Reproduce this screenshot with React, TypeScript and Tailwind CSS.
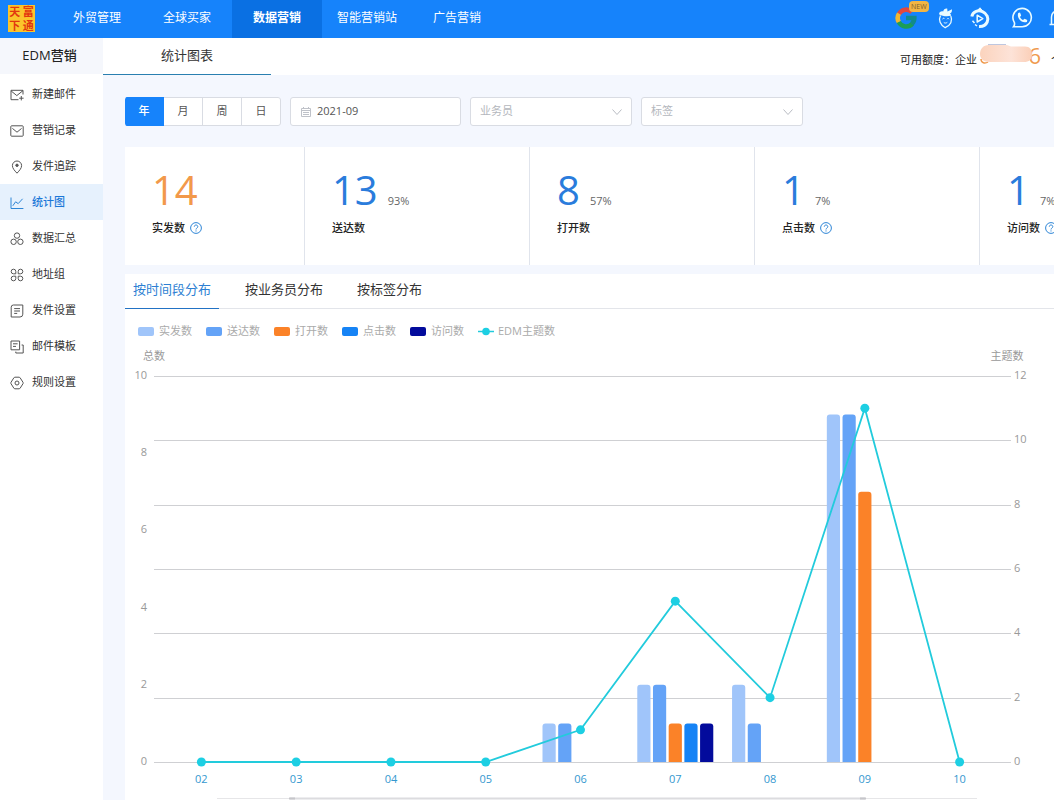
import React, { useState } from 'react'
import clsx from 'clsx'

const navItems = ['外贸管理', '全球买家', '数据营销', '智能营销站', '广告营销']

const sideItems = [
  { label: '新建邮件', icon: 'mailPlus' },
  { label: '营销记录', icon: 'mail' },
  { label: '发件追踪', icon: 'pin' },
  { label: '统计图', icon: 'chart' },
  { label: '数据汇总', icon: 'circles' },
  { label: '地址组', icon: 'grid' },
  { label: '发件设置', icon: 'note' },
  { label: '邮件模板', icon: 'template' },
  { label: '规则设置', icon: 'setting' },
]

const stats = [
  { value: '14', label: '实发数', percent: '', help: true },
  { value: '13', label: '送达数', percent: '93%', help: false },
  { value: '8', label: '打开数', percent: '57%', help: false },
  { value: '1', label: '点击数', percent: '7%', help: true },
  { value: '1', label: '访问数', percent: '7%', help: true },
]

const series = [
  { name: '实发数', color: '#a0c5fa', data: [0, 0, 0, 0, 1, 2, 2, 9, 0] },
  { name: '送达数', color: '#64a3f7', data: [0, 0, 0, 0, 1, 2, 1, 9, 0] },
  { name: '打开数', color: '#fb8228', data: [0, 0, 0, 0, 0, 1, 0, 7, 0] },
  { name: '点击数', color: '#1683f5', data: [0, 0, 0, 0, 0, 1, 0, 0, 0] },
  { name: '访问数', color: '#030b9c', data: [0, 0, 0, 0, 0, 1, 0, 0, 0] },
]
const months = ['02', '03', '04', '05', '06', '07', '08', '09', '10']
const subjects = [0, 0, 0, 0, 1, 5, 2, 11, 0]

const icons: Record<string, React.ReactNode> = {
  mailPlus: (
    <>
      <path d="M13 6.5V2.3H1v9.4h7.5M1.2 3l5.6 4.6L13 2.6" />
      <path d="M11.3 8v4.4M9.2 10.2h4.4" />
    </>
  ),
  mail: (
    <>
      <rect x="0.8" y="1.8" width="12.4" height="10.4" rx="0.8" />
      <path d="M2.4 4.4 7 8.2l4.6-3.8" />
    </>
  ),
  pin: (
    <>
      <path d="M7 13.2C4.4 10.4 2.4 8.2 2.4 5.6a4.6 4.6 0 0 1 9.2 0c0 2.600-2 4.800-4.600 7.600z" />
      <circle cx="7" cy="5.3" r="1.2" fill="currentColor" />
    </>
  ),
  chart: <path d="M1 1.500v11h12.400M2.800 9.800l2.800-4 2.600 1.800 4.400-4.800" />,
  circles: (
    <>
      <circle cx="7" cy="3.6" r="2.7" />
      <circle cx="3.6" cy="9.8" r="2.7" />
      <circle cx="10.4" cy="9.8" r="2.7" />
    </>
  ),
  grid: (
    <>
      <path d="M5.800 3.500a2.300 2.300 0 1 0-2.300 2.300h2.300zM8.200 3.500a2.300 2.300 0 1 1 2.300 2.300H8.200z" />
      <path d="M5.800 10.500a2.300 2.300 0 1 1-2.300-2.300h2.300zM8.200 10.500a2.300 2.300 0 1 0 2.300-2.300H8.200z" />
    </>
  ),
  note: (
    <>
      <path d="M3.400 1h9.400v9.200a2.800 2.800 0 0 1-2.800 2.800H1.200V3.200A2.200 2.200 0 0 1 3.400 1z" />
      <path d="M4.200 4.600h5.800M4.200 7h5.800M4.200 9.400h3" />
    </>
  ),
  template: (
    <>
      <path d="M9.600 9.800H1V1h8.600z" />
      <path d="M3 3.800h4.600M3 6.400h3M11.600 5h1.600v8H5.800v-1.400" />
    </>
  ),
  setting: (
    <>
      <path d="M5 1.200h4q.8 0 1.200.7l2.800 4.400q.4.700 0 1.400l-2.800 4.400q-.4.700-1.200.7H5q-.8 0-1.200-.7L1 7.700q-.4-.7 0-1.400l2.800-4.400Q4.200 1.200 5 1.200z" />
      <circle cx="7" cy="7" r="2" />
    </>
  ),
}

const SideIcon = ({ name }: { name: string }) => (
  <svg className="h-[14px] w-[14px] shrink-0" viewBox="0 0 14 14" fill="none" stroke="currentColor">
    {icons[name]}
  </svg>
)

const HelpIcon = () => (
  <svg className="h-3 w-3" viewBox="0 0 12 12" fill="none" stroke="#2f86d6">
    <circle cx="6" cy="6" r="5.4" />
    <path d="M4.300 4.700c0-2.300 3.500-2.200 3.500 0C7.800 6 6 6 6 7.500M6 8.400v1.100" />
  </svg>
)

const Header = () => (
  <header className="flex h-[38px] shrink-0 overflow-hidden bg-[#1683fb] text-white">
    <a href="#" className="flex w-[52px] shrink-0 pt-[5px] pl-2">
      <span className="grid h-[27px] w-[27px] grid-cols-2 place-items-center bg-[#fbc52b] text-[11px] leading-[13px] font-bold text-[#e2380f]">
        <span>天</span>
        <span>富</span>
        <span>下</span>
        <span>通</span>
      </span>
    </a>
    <nav className="flex">
      {navItems.map((item) => (
        <a
          key={item}
          href="#"
          className={clsx(
            'flex w-[90px] items-center justify-center pb-[3px] text-[12px]',
            item === '数据营销' && 'bg-[#0a70e3] font-bold'
          )}
        >
          {item}
        </a>
      ))}
    </nav>
    <div className="ml-auto flex w-[159px] shrink-0 items-center pb-[3px]">
      <button aria-label="Google" className="relative mr-[18px] shrink-0">
        <svg className="h-[22px] w-[22px]" viewBox="0 0 22 22" fill="none" strokeWidth="4.600">
          <path d="M4 6.800A8.300 8.300 0 0 1 17 5" stroke="#e0483e" />
          <path d="M4 6.600a8.300 8.300 0 0 0 0 8.800" stroke="#f3b72f" />
          <path d="M3.800 15a8.300 8.300 0 0 0 13.400 1.900" stroke="#1c9d58" />
          <path d="M11 11h8.300a8 8 0 0 1-2.600 6" stroke="#128a8c" />
        </svg>
        <span className="absolute -top-[6px] left-[14px] rounded-sm bg-[#f2b544] px-[2px] text-[7px] leading-[11px] text-[#80602c]">
          NEW
        </span>
      </button>
      <button aria-label="萝卜" className="mr-3 shrink-0">
        <svg className="h-[22px] w-[22px]" viewBox="0 0 22 22" fill="none" stroke="#e9fbff" strokeWidth="1.300">
          <path d="M5.500 8.500c-2.300 4.500-.3 9.300 4.700 12.200 5.500-2.300 7.700-7 5.600-11.700" />
          <path d="M4 7.200c.3-2.200 2-3.200 4.200-2.700.3-2.300 2-3.300 4-3l.3 3 4.500-2.200c0 2.500-.6 3.700-2.200 4.500 1 .3 1.400 1 1.200 2-4 .8-8.500.6-12-1.600z" fill="#e9fbff" stroke="none" />
          <path d="M7.500 12c.8-1 1.500-1 2 0m2.500.2c.7-1 1.400-1 2 0M8.800 15.500c1.200.8 2.400.7 3.500-.2" strokeWidth="1" />
        </svg>
      </button>
      <button aria-label="视频" className="mr-5 shrink-0">
        <svg className="h-[22px] w-[22px]" viewBox="0 0 22 22" fill="none" stroke="#e9fbff">
          <path d="M2.800 9.500C4 4 9.500 2.800 13.500 4.600c4.500 2 6.500 6.500 4.700 10.400-1.500 3.300-4.700 4.700-8.200 4.500" strokeWidth="3" />
          <path d="m3.500 13.800 2 2.200M6 17.500l2 1.500" strokeWidth="1.500" />
          <path d="M8 3.800 11 .8l2.500 3" fill="#e9fbff" />
          <path d="m8.200 8.200 5.600 3.400-5.600 3.400z" strokeWidth="1.500" strokeLinejoin="round" />
        </svg>
      </button>
      <button aria-label="电话" className="mr-[14px] shrink-0">
        <svg className="h-[22px] w-[22px]" viewBox="0 0 22 22" fill="none" stroke="#e9fbff" strokeWidth="1.600">
          <path d="M2.500 19.800H11a9.200 9.200 0 1 0-7.600-4.200c.4 1.600.2 2.800-.9 4.200z" />
          <path d="M7.200 6 9 5.600l1.200 2.800-1.200 1.500c.6 1.400 1.600 2.400 3 3.100l1.600-1.200 2.700 1.300-.4 1.800c-5 2-10.600-3.900-8.700-8.900z" fill="#e9fbff" stroke="none" />
        </svg>
      </button>
      <button aria-label="通知" className="shrink-0">
        <svg className="h-[22px] w-[22px]" viewBox="0 0 22 22" fill="none" stroke="#e9fbff" strokeWidth="1.500">
          <path d="M2.500 17.500h17M4.500 17V10a6.500 6.500 0 0 1 13 0v7M9 20h4" />
        </svg>
      </button>
    </div>
  </header>
)

const Sidebar = () => (
  <aside className="w-[103px] shrink-0 bg-white">
    <h1 className="flex h-9 items-center justify-center bg-[#f5f7fc] pr-1 text-[13px] font-medium text-[#222]">
      EDM营销
    </h1>
    <ul className="pt-[2px]">
      {sideItems.map((item) => (
        <li key={item.label}>
          <a
            href="#"
            className={clsx(
              'flex h-9 items-center gap-2 pt-px pl-[10px] text-[11px]',
              item.label === '统计图' ? 'bg-[#e6f1fd] font-medium text-[#1c78d8]' : 'text-[#333]'
            )}
          >
            <span className={item.label === '统计图' ? 'text-[#2f86d6]' : 'text-[#555]'}>
              <SideIcon name={item.icon} />
            </span>
            {item.label}
          </a>
        </li>
      ))}
    </ul>
  </aside>
)

const TitleBar = () => (
  <div className="flex h-[37px] justify-between bg-white">
    <h2 className="flex w-[168px] items-center justify-center border-b border-[#2a7fb0] text-[13px] text-[#333]">
      统计图表
    </h2>
    <div className="flex w-[154px] shrink-0 items-center pt-2 text-[11px] whitespace-nowrap text-[#222]">
      <span className="shrink-0">可用额度：企业</span>
      <span className="relative ml-[3px] w-[61px] shrink-0 pb-3 text-right text-[22px] leading-6 text-[#ef9a4e]">
        6
        <svg className="absolute top-0 left-0 h-6 w-[56px]" viewBox="0 0 56 24">
          <defs>
            <linearGradient id="mask">
              <stop offset="0" stopColor="#fbd3bd" />
              <stop offset="0.6" stopColor="#fde3d8" />
              <stop offset="1" stopColor="#fbcfb8" />
            </linearGradient>
          </defs>
          <path d="M1 16c0 4 4 5 7 3" fill="none" stroke="#ef9a4e" strokeWidth="1.500" />
          <path d="M8 2h18" stroke="#7d8fc0" />
          <path d="M9 2h18l4 1.500h14c5 0 7 3 7 8 0 5-3 7.500-8 7.500H10C4 19 0 16 0 11 0 6 3 2 9 2z" fill="url(#mask)" />
        </svg>
      </span>
      <span className="ml-[10px] shrink-0">个</span>
    </div>
  </div>
)

const FilterSelect = ({ label }: { label: string }) => (
  <div className="relative w-[162px]">
    <select
      aria-label={label}
      className="h-[29px] w-full appearance-none rounded-[3px] border border-[#d9dce3] bg-white px-[9px] text-[11px] text-[#b4b7bd]"
    >
      <option>{label}</option>
    </select>
    <svg
      className="pointer-events-none absolute top-[11px] right-[10px] h-2 w-[10px]"
      viewBox="0 0 10 8"
      fill="none"
      stroke="#b9bcc4"
    >
      <path d="m.5 1.500 4.500 5 4.500-5" />
    </svg>
  </div>
)

const Filters = () => {
  const [period, setPeriod] = useState('年')
  return (
    <div className="flex gap-[9px]">
      <div className="flex h-[29px] w-[156px] overflow-hidden rounded-[3px]">
        {['年', '月', '周', '日'].map((p) => (
          <button
            key={p}
            onClick={() => setPeriod(p)}
            className={clsx(
              'flex-1 border-y border-r text-[11px] last:rounded-r-[3px]',
              period === p
                ? 'border-[#1683fb] bg-[#1683fb] font-medium text-white'
                : 'border-[#d9dce3] bg-white text-[#555]'
            )}
          >
            {p}
          </button>
        ))}
      </div>
      <label className="flex h-[29px] w-[171px] items-center gap-[6px] rounded-[3px] border border-[#d9dce3] bg-white pl-[10px]">
        <svg className="h-[10px] w-[10px] shrink-0" viewBox="0 0 10 10" fill="none" stroke="#bfc2c9">
          <path d="M.5 1.500h9v8h-9zM.5 3.500h9M2.500 0v2M7.500 0v2M2 5.500h6M2 7.500h6" />
        </svg>
        <input aria-label="日期" defaultValue="2021-09" className="w-full bg-transparent text-[11px] text-[#555] outline-none" />
      </label>
      <FilterSelect label="业务员" />
      <FilterSelect label="标签" />
    </div>
  )
}

const StatCards = () => (
  <div className="mt-[21px] flex bg-white">
    {stats.map((s, i) => (
      <div
        key={s.label}
        className={clsx(
          'h-[118px] shrink-0 border-r border-[#e0e4ec] pt-[23px] pl-[27px] last:border-r-0',
          i === 0 ? 'w-[180px]' : 'w-[225px]'
        )}
      >
        <div className="flex items-baseline gap-[10px]">
          <span
            className={clsx('text-[40px] leading-10', i === 0 ? 'text-[#f2994a]' : 'text-[#2a7cdc]')}
          >
            {s.value}
          </span>
          {s.percent && <span className="text-[11px] text-[#666]">{s.percent}</span>}
        </div>
        <div className="mt-[10px] flex items-center gap-[5px] text-[11px] leading-4 font-medium text-[#222]">
          {s.label}
          {s.help && <HelpIcon />}
        </div>
      </div>
    ))}
  </div>
)

// plot area inside the 929 x 460 view box
const LEFT = 29
const RIGHT = 882
const TOP = 36
const BOTTOM = 422
const BAND = (RIGHT - LEFT) / months.length
const BAR_STEP = 15.7
const BAR_WIDTH = 13.2

const centerX = (i: number) => LEFT + BAND * (i + 0.5)
const countY = (v: number) => BOTTOM - ((BOTTOM - TOP) * v) / 10
const subjectY = (v: number) => BOTTOM - ((BOTTOM - TOP) * v) / 12

const barPath = (x: number, y: number) =>
  `M${x} ${BOTTOM}V${y + 3}q0-3 3-3h${BAR_WIDTH - 6}q3 0 3 3V${BOTTOM}z`

const Chart = () => (
  <svg className="block w-full" viewBox="0 0 929 460" fontSize="11" fill="#999">
    <text x="29" y="20" textAnchor="middle">总数</text>
    <text x="882" y="20" textAnchor="middle">主题数</text>

    {[0, 2, 4, 6, 8, 10, 12].map((v) => (
      <g key={v}>
        <path
          d={`M${LEFT} ${Math.round(subjectY(v)) + 0.5}H${RIGHT + 4}`}
          stroke="#cfd0d3"
        />
        <text x={RIGHT + 7} y={subjectY(v) + 3}>{v}</text>
      </g>
    ))}
    {[0, 2, 4, 6, 8, 10].map((v) => (
      <text key={v} x="22" y={countY(v) + 3} textAnchor="end">{v}</text>
    ))}

    {series.map((s, si) =>
      s.data.map(
        (v, i) =>
          v > 0 && (
            <path
              key={s.name + i}
              d={barPath(centerX(i) + (si - 2) * BAR_STEP - BAR_WIDTH / 2, countY(v))}
              fill={s.color}
            />
          )
      )
    )}

    <polyline
      points={subjects.map((v, i) => `${centerX(i)},${subjectY(v)}`).join(' ')}
      fill="none"
      stroke="#22cbdc"
      strokeWidth="1.800"
    />
    {subjects.map((v, i) => (
      <circle key={i} cx={centerX(i)} cy={subjectY(v)} r="4.500" fill="#1dcfe3" />
    ))}
    {months.map((m, i) => (
      <text key={m} x={centerX(i)} y="443" textAnchor="middle" fill="#3498cf">{m}</text>
    ))}

    {/* range slider */}
    <path d="M92 458.500H852" stroke="#e6e6e8" />
    <path d="M165 458.500H740" stroke="#dcdcdf" strokeWidth="2" />
    <path d="M164 458.500h6M735 458.500h6" stroke="#c6c6ca" strokeWidth="2" />
  </svg>
)

const Legend = () => (
  <ul className="flex h-[31px] items-center gap-[14px] pt-[13px] pl-[13px] text-[11px] text-[#aaa]">
    {series.map((s) => (
      <li key={s.name} className="flex items-center gap-[5px]">
        <span className="h-[9px] w-4 rounded-[2px]" style={{ backgroundColor: s.color }} />
        {s.name}
      </li>
    ))}
    <li className="flex items-center gap-1">
      <svg className="h-[9px] w-4" viewBox="0 0 16 9">
        <path d="M0 4.500h16" stroke="#22cbdc" strokeWidth="1.500" />
        <circle cx="8" cy="4.500" r="3.800" fill="#1dcfe3" />
      </svg>
      EDM主题数
    </li>
  </ul>
)

const ChartPanel = () => {
  const [tab, setTab] = useState('按时间段分布')
  return (
    <section className="mt-[9px] bg-white">
      <div className="flex h-[35px] gap-[18px] border-b border-[#e3e5ea]">
        {['按时间段分布', '按业务员分布', '按标签分布'].map((t) => (
          <button
            key={t}
            onClick={() => setTab(t)}
            className={clsx(
              '-mb-px border-b px-2 pb-[2px] text-[13px]',
              tab === t ? 'border-[#2272c4] text-[#2d7fd3]' : 'border-transparent text-[#333]'
            )}
          >
            {t}
          </button>
        ))}
      </div>
      <Legend />
      <Chart />
    </section>
  )
}

const App = () => {
  return (
    <div className="flex min-h-screen flex-col overflow-hidden bg-[#f4f7fe] font-['Open_Sans','Noto_Sans_CJK_SC',sans-serif]">
      <Header />
      <div className="flex flex-1">
        <Sidebar />
        <main className="min-w-0 flex-1">
          <TitleBar />
          <div className="overflow-hidden pt-[22px] pl-[22px]">
            <Filters />
            <StatCards />
            <ChartPanel />
          </div>
        </main>
      </div>
    </div>
  )
}

export default App
